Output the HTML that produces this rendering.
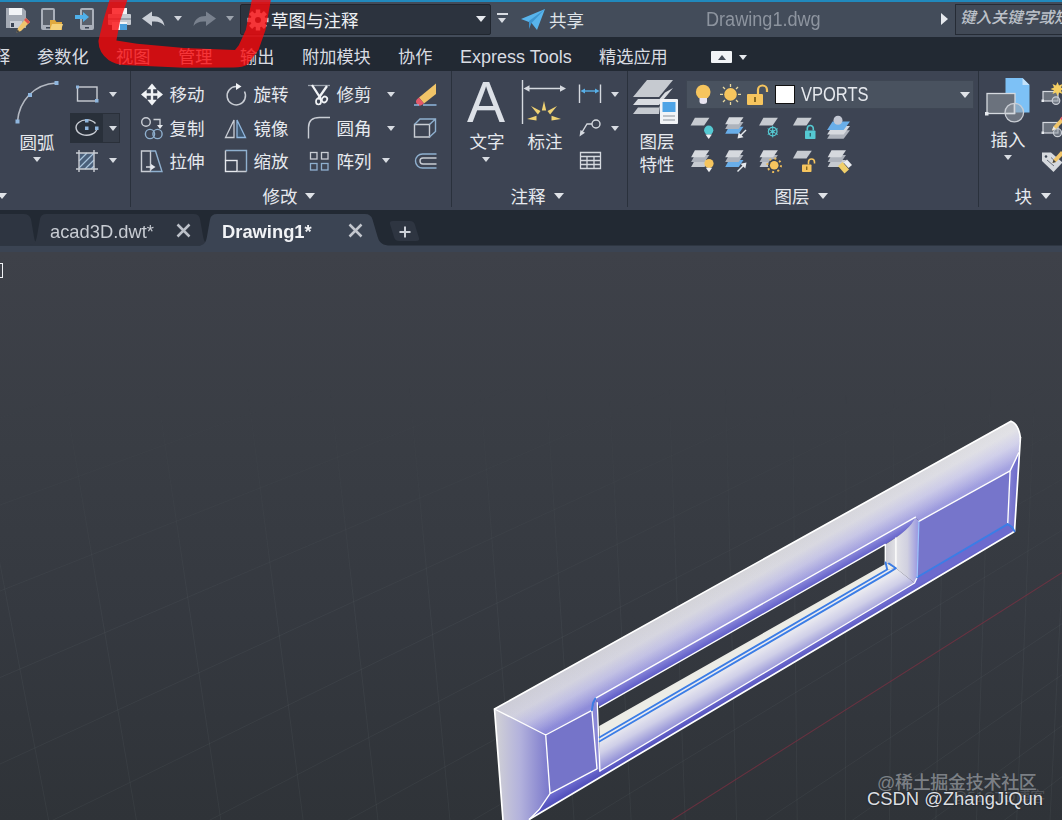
<!DOCTYPE html>
<html lang="zh-CN">
<head>
<meta charset="utf-8">
<title>Drawing1.dwg</title>
<style>
*{box-sizing:border-box;margin:0;padding:0}
html,body{width:1062px;height:820px;overflow:hidden;background:#2f343a}
body{position:relative;font-family:"Liberation Sans","Noto Sans CJK SC",sans-serif;color:#e4e7ec;font-size:17px;line-height:1}
.abs{position:absolute}
#titlebar{position:absolute;left:0;top:0;width:1062px;height:37px;background:#434c5a;border-top:2px solid #2189bd}
#menubar{position:absolute;left:0;top:37px;width:1062px;height:34px;background:#222933}
#ribbon{position:absolute;left:0;top:71px;width:1062px;height:139px;background:#3d4453}
#tabbar{position:absolute;left:0;top:210px;width:1062px;height:38px;background:#222933}
#tabline{position:absolute;left:0;top:247px;width:1062px;height:5px;background:#3b4453}
#canvas{position:absolute;left:0;top:252px;width:1062px;height:568px;background:linear-gradient(#3e4149,#393d44 35%,#353940 64%,#2f3338)}
.t{position:absolute;white-space:nowrap}
.m{position:absolute;top:49px;white-space:nowrap;font-size:17.200px;color:#d9dce2}
.sep{position:absolute;top:71px;width:1px;height:136px;background:#2a313c}
.lbl{position:absolute;white-space:nowrap;font-size:17.500px;color:#e6e9ee;margin-top:1.500px;margin-left:-0.500px}
.tri{position:absolute;width:0;height:0;border-left:5px solid transparent;border-right:5px solid transparent;border-top:6px solid #e0e3e8}
.tris{position:absolute;width:0;height:0;border-left:4px solid transparent;border-right:4px solid transparent;border-top:5px solid #d8dce2}
</style>
</head>
<body>
<div id="titlebar">
<!-- save as -->
<svg class="abs" style="left:4px;top:2.5px" width="28" height="28" viewBox="0 0 28 28">
<path d="M2 3h17l3 3v17H2z" fill="#a4aab4"/><rect x="5" y="3" width="13" height="7" fill="#f2f4f7"/><rect x="6" y="16" width="12" height="7" fill="#c9cdd4"/><rect x="7" y="18" width="3" height="4" fill="#3b4453"/>
<path d="M22 13l4 4-9 9-4.5 1.5L14 23z" fill="#f0c46c"/><path d="M22 13l4 4-2 2-4-4z" fill="#e0524f"/><path d="M12.500 27.5l1-3 2 2z" fill="#444"/>
</svg>
<!-- open from mobile -->
<svg class="abs" style="left:38px;top:2.5px" width="26" height="28" viewBox="0 0 26 28">
<rect x="3" y="3" width="14" height="22" rx="2" fill="#aab0ba"/><rect x="5" y="5" width="10" height="15" fill="#5a616c"/><rect x="8" y="22" width="4" height="1.500" fill="#3b4453"/>
<path d="M12 15h5l1.500 2H24v8H12z" fill="#e0a93f"/><path d="M14 19h11l-2 6H12z" fill="#f5d27c"/>
</svg>
<!-- save to mobile -->
<svg class="abs" style="left:73px;top:2.5px" width="26" height="28" viewBox="0 0 26 28">
<rect x="7" y="3" width="14" height="22" rx="2" fill="#aab0ba"/><rect x="9" y="5" width="10" height="15" fill="#5a616c"/><rect x="12" y="22" width="4" height="1.500" fill="#3b4453"/>
<path d="M2 10h8V7l6 5-6 5v-3H2z" fill="#4fb0ea"/>
</svg>
<!-- print -->
<svg class="abs" style="left:106px;top:4.5px" width="28" height="26" viewBox="0 0 28 26">
<rect x="6" y="1" width="15" height="7" fill="#f2f4f7"/><rect x="2" y="7" width="23" height="11" rx="1" fill="#c5cad1"/><rect x="2" y="11" width="23" height="2" fill="#9aa1ab"/><rect x="6" y="15" width="15" height="8" fill="#f2f4f7"/><rect x="14" y="17" width="7" height="6" fill="#4a9fdc"/>
</svg>
<!-- undo -->
<svg class="abs" style="left:140px;top:7.5px" width="28" height="20" viewBox="0 0 28 20">
<path d="M2 8.500L12 1.500v4.500c7 0 11.500 3 12.500 10-2.500-3.500-6-5-12.500-4.500V16z" fill="#c9ced6"/>
</svg>
<div class="tris" style="left:174px;top:13.5px;border-top-color:#cfd3da"></div>
<!-- redo -->
<svg class="abs" style="left:190px;top:7.5px" width="28" height="20" viewBox="0 0 28 20">
<path d="M26 8.500L16 1.500v4.500C9 6 4.500 9 3.500 16c2.500-3.500 6-5 12.500-4.500V16z" fill="#79818e"/>
</svg>
<div class="tris" style="left:226px;top:13.5px;border-top-color:#9ca3ad"></div>
<!-- workspace dropdown -->
<div class="abs" style="left:240px;top:2px;width:251px;height:31px;background:#2c333e;border:1px solid #20262f;border-radius:2px"></div>
<svg class="abs" style="left:246px;top:6px" width="24" height="24" viewBox="-12 -12 24 24">
<g fill="#d9dce1"><circle r="7.500"/>
<g id="gt"><rect x="-2.200" y="-10.500" width="4.400" height="21"/></g>
<use href="#gt" transform="rotate(45)"/><use href="#gt" transform="rotate(90)"/><use href="#gt" transform="rotate(135)"/></g>
<circle r="3" fill="#2c333e"/>
</svg>
<div class="t" style="left:271px;top:10.500px;font-size:17.500px;color:#eef0f3">草图与注释</div>
<div class="tri" style="left:476px;top:14px;border-top-color:#e6e9ee"></div>
<div class="abs" style="left:497px;top:11px;width:11px;height:2px;background:#d8dce2"></div>
<div class="tris" style="left:498px;top:16px;border-left-width:4.500px;border-right-width:4.500px"></div>
<!-- share -->
<svg class="abs" style="left:520px;top:6px" width="26" height="24" viewBox="0 0 26 24">
<path d="M1 11L25 1 17 22 11.500 15z" fill="#58b4ec"/><path d="M11.500 15L25 1 9 13v8z" fill="#3d95d0"/>
</svg>
<div class="t" style="left:549px;top:10.500px;font-size:17.500px;color:#dfe3e8">共享</div>
<div class="t" style="left:706px;top:7px;font-size:20px;color:#8d949f;transform-origin:0 50%;transform:scaleX(0.905)">Drawing1.dwg</div>
<div class="abs" style="left:941px;top:11px;width:0;height:0;border-top:6px solid transparent;border-bottom:6px solid transparent;border-left:7px solid #e6e9ee"></div>
<div class="abs" style="left:955px;top:2px;width:110px;height:31px;background:#414956;border:1px solid #252b35"></div>
<div class="t" style="left:960px;top:8px;font-size:15.700px;font-style:italic;font-weight:500;color:#bcc1c9">键入关键字或短语</div>
</div>
<div id="menubar"></div>
<div class="m" style="left:-7px">释</div>
<div class="m" style="left:37px">参数化</div>
<div class="m" style="left:116px">视图</div>
<div class="m" style="left:178px">管理</div>
<div class="m" style="left:240px">输出</div>
<div class="m" style="left:302px">附加模块</div>
<div class="m" style="left:398px">协作</div>
<div class="m" style="left:460px;font-size:18px;top:48px">Express Tools</div>
<div class="m" style="left:599px">精选应用</div>
<div class="abs" style="left:711px;top:51px;width:21px;height:12px;background:#f1f3f6;border-radius:1px"></div>
<div class="abs" style="left:717.500px;top:55px;width:0;height:0;border-left:4px solid transparent;border-right:4px solid transparent;border-bottom:5px solid #444b57"></div>
<div class="tris" style="left:739px;top:55px;border-top-color:#e6e9ee"></div>
<div id="ribbon"></div>
<div class="sep" style="left:130px"></div>
<div class="sep" style="left:451px"></div>
<div class="sep" style="left:627px"></div>
<div class="sep" style="left:978px"></div>
<!-- RIBBON-TEXT -->
<div class="lbl" style="left:20px;top:133px">圆弧</div>
<div class="tris" style="left:33px;top:157px"></div>
<div class="tris" style="left:109px;top:92px"></div>
<div class="abs" style="left:70px;top:113px;width:50px;height:30px;background:#363d49;border:1px solid #2a303a"></div>
<div class="abs" style="left:70px;top:113px;width:33px;height:30px;background:#29303a"></div>
<div class="tris" style="left:109px;top:126px"></div>
<div class="tris" style="left:109px;top:158px"></div>
<div class="tri" style="left:-3px;top:193px"></div>

<div class="lbl" style="left:170px;top:85px">移动</div>
<div class="lbl" style="left:170px;top:119px">复制</div>
<div class="lbl" style="left:170px;top:152px">拉伸</div>
<div class="lbl" style="left:254px;top:85px">旋转</div>
<div class="lbl" style="left:254px;top:119px">镜像</div>
<div class="lbl" style="left:254px;top:152px">缩放</div>
<div class="lbl" style="left:337px;top:85px">修剪</div>
<div class="lbl" style="left:337px;top:119px">圆角</div>
<div class="lbl" style="left:337px;top:152px">阵列</div>
<div class="tris" style="left:387px;top:92px"></div>
<div class="tris" style="left:387px;top:126px"></div>
<div class="tris" style="left:382px;top:158px"></div>
<div class="lbl" style="left:263px;top:187px">修改</div>
<div class="tri" style="left:305px;top:193px"></div>

<div class="t" style="left:467px;top:71px;font-size:57px;line-height:62px;color:#dde1e7">A</div>
<div class="lbl" style="left:470px;top:132.500px">文字</div>
<div class="tris" style="left:482px;top:157px"></div>
<div class="lbl" style="left:528px;top:132.500px">标注</div>
<div class="tris" style="left:611px;top:92px"></div>
<div class="tris" style="left:611px;top:126px"></div>
<div class="lbl" style="left:511px;top:187px">注释</div>
<div class="tri" style="left:554px;top:193px"></div>

<div class="lbl" style="left:640px;top:132px">图层</div>
<div class="lbl" style="left:640px;top:155px">特性</div>
<div class="abs" style="left:686px;top:80px;width:288px;height:29px;background:#49525f;border:1px solid #3e4653"></div>
<div class="abs" style="left:775px;top:85px;width:20px;height:19px;background:#fff;border:1px solid #111"></div>
<div class="t" style="left:801px;top:84px;font-size:20px;color:#e6e9ee;transform-origin:0 50%;transform:scaleX(0.825)">VPORTS</div>
<div class="tri" style="left:960px;top:92px"></div>
<div class="lbl" style="left:775px;top:187px">图层</div>
<div class="tri" style="left:818px;top:193px"></div>

<div class="lbl" style="left:991px;top:130.500px">插入</div>
<div class="tris" style="left:1004px;top:155px"></div>
<div class="lbl" style="left:1015px;top:187px">块</div>
<div class="tri" style="left:1041px;top:193px"></div>
<!-- RIBBON-ICONS -->
<svg class="abs" style="left:0;top:71px" width="1062" height="138" viewBox="0 71 1062 138" fill="none">
<!-- arc -->
<path d="M17.500 121.500C19 101 34 84 56.500 83" stroke="#b4b9c2" stroke-width="1.600"/>
<g fill="#8fb6de"><rect x="54.500" y="81" width="4" height="4"/><rect x="28" y="93" width="4" height="4"/><rect x="15.500" y="119.500" width="4" height="4"/></g>
<!-- rectangle -->
<rect x="77.500" y="87" width="19.500" height="14" stroke="#c9cdd4" stroke-width="1.400"/>
<g fill="#8fb6de"><rect x="76" y="85.500" width="3" height="3"/><rect x="95" y="99" width="3.500" height="3.500"/></g>
<!-- ellipse -->
<path d="M95.500 123.500A10.500 7.700 0 1 0 97 128.500" stroke="#c9cdd4" stroke-width="1.400"/>
<g fill="#8fb6de"><rect x="85" y="126.500" width="3.500" height="3.500"/><rect x="85" y="119" width="3.500" height="3.500"/><rect x="95" y="126.500" width="3.500" height="3.500"/></g>
<!-- hatch -->
<rect x="79" y="153" width="15" height="16" fill="#4a5f7a"/>
<path d="M79 161l8-8M79 168l15-15M85 169l9-9M91 169l3-3" stroke="#a9c4dd" stroke-width="1.200"/>
<path d="M76 153h22M76 169h22M79 150v22M94 150v22" stroke="#c9cdd4" stroke-width="1.400"/>
<!-- move -->
<path d="M152 86v17M143.500 94.500h17" stroke="#f1f3f6" stroke-width="2.400"/>
<g fill="#f1f3f6"><path d="M152 83.500l4.800 5.700h-9.600zM152 105.500l4.800-5.700h-9.600zM141 94.500l5.700-4.800v9.600zM163 94.500l-5.700-4.800v9.600z"/></g>
<!-- copy -->
<g stroke="#c9cdd4" stroke-width="1.400"><circle cx="146" cy="122" r="4.300"/><path d="M153.500 119.500h6.500v6"/></g>
<path d="M157 125h6l-3 4z" fill="#e6e9ee"/>
<g stroke="#8fb0cf" stroke-width="1.400"><circle cx="150" cy="134" r="4.600"/><circle cx="157.500" cy="134" r="4.600"/></g>
<!-- stretch -->
<path d="M141.500 151h9v20.500h-9z" stroke="#c9cdd4" stroke-width="1.400"/>
<path d="M150.500 151h5l6.500 20.500h-11.500" stroke="#8fb0cf" stroke-width="1.400"/>
<path d="M146 167h6" stroke="#e6e9ee" stroke-width="1.400"/><path d="M151 164l4.500 3-4.500 3z" fill="#e6e9ee"/>
<!-- rotate -->
<path d="M236 86.500A9.200 9.200 0 1 0 244.500 91.500" stroke="#c9cdd4" stroke-width="1.500"/>
<path d="M236 83l5.500 3.500-5.500 3.500z" fill="#f1f3f6"/>
<!-- mirror -->
<path d="M234 120v17.500h-8.500z" stroke="#c9cdd4" stroke-width="1.300"/>
<path d="M237 120v17.500h8.500z" stroke="#8fb6de" stroke-width="1.300" fill="#3d566f"/>
<!-- scale -->
<path d="M225.500 150.500h21v21" stroke="#8fb0cf" stroke-width="1.400"/><path d="M225.500 150.500v10M246.500 171.500h-9" stroke="#c9cdd4" stroke-width="1.400"/>
<rect x="225.500" y="160.500" width="11.500" height="11" stroke="#e6e9ee" stroke-width="1.400"/>
<!-- trim -->
<path d="M308 85.500h22" stroke="#9aa1ab" stroke-width="1.300"/>
<path d="M312 85l9 14M327 86l-9 13" stroke="#f1f3f6" stroke-width="2.300"/>
<g stroke="#f1f3f6" stroke-width="1.700"><ellipse cx="318.500" cy="101.500" rx="2.500" ry="3"/><ellipse cx="324.500" cy="99.500" rx="2.500" ry="3" transform="rotate(35 324.500 99.500)"/></g>
<!-- fillet -->
<path d="M308.500 138.500v-11q0-10 11-10h10.500" stroke="#c9cdd4" stroke-width="1.400"/>
<!-- array -->
<g stroke="#c9cdd4" stroke-width="1.300"><rect x="310.500" y="152.500" width="6.500" height="6.500"/><rect x="321.500" y="152.500" width="6.500" height="6.500"/></g>
<g stroke="#8fb0cf" stroke-width="1.300"><rect x="310.500" y="163.500" width="6.500" height="6.500"/><rect x="321.500" y="163.500" width="6.500" height="6.500"/></g>
<!-- erase -->
<path d="M436 83.500v10.500l-12 9.500-5-6z" fill="#f0c468"/><path d="M424 103.500l-5-6-1.500 1.300a3.800 3.800 0 0 0 5 5.800z" fill="#e4596a"/>
<path d="M414 105h5M423 105h13.500" stroke="#8fb6de" stroke-width="1.300"/>
<!-- box -->
<path d="M414.500 124.500h15v12.500h-15z" stroke="#c9cdd4" stroke-width="1.400"/>
<path d="M414.500 124.500l5.500-5.500h15.500v12.500l-6 5.500M429.500 124.500l6-5.500" stroke="#8fb0cf" stroke-width="1.400"/>
<!-- offset -->
<path d="M436.500 154H422.500a7 7 0 0 0 0 14H436.500" stroke="#8fb0cf" stroke-width="1.400"/>
<path d="M436.500 158H423a3 3 0 0 0 0 6H436.500" stroke="#c9cdd4" stroke-width="1.400"/>
</svg>
<!-- ANNOT -->
<svg class="abs" style="left:0;top:71px" width="1062" height="138" viewBox="0 71 1062 138" fill="none">
<!-- dimension big -->
<path d="M522.500 80v44" stroke="#d5d9df" stroke-width="1.400"/>
<path d="M527 88.500h35" stroke="#d5d9df" stroke-width="1.400"/>
<path d="M523.500 88.500l6-3.300v6.600zM566 88.500l-6-3.300v6.600z" fill="#d5d9df"/>
<g fill="#f0d272"><path d="M544 101l2.200 9.500h-4.400z"/><path d="M531 106l9.500 5-2.600 3.600z"/><path d="M557 106l-9.500 5 2.600 3.600z"/><path d="M527 119l9.500-3.200v4.600z"/><path d="M561 119l-9.500-3.200v4.600z"/></g>
<!-- linear dim small -->
<path d="M579.500 84.500v18.500M600.500 84.500v18.500" stroke="#d5d9df" stroke-width="1.400"/>
<path d="M583 91h14" stroke="#58b0e8" stroke-width="1.400"/><path d="M580.500 91l4.500-2.600v5.200zM599.500 91l-4.500-2.600v5.200z" fill="#58b0e8"/>
<!-- leader -->
<circle cx="596" cy="124" r="4" stroke="#d5d9df" stroke-width="1.400"/>
<path d="M592 124h-5l-5.500 9" stroke="#d5d9df" stroke-width="1.400"/><path d="M579.500 136.500l1-6.500 4.500 2.800z" fill="#d5d9df"/>
<!-- table -->
<path d="M580.500 152.500h20v16h-20zM580.500 156.500h20M580.500 160.500h20M580.500 164.500h20M587 156.500v12M594 156.500v12" stroke="#d5d9df" stroke-width="1.300"/>
<!-- layer properties big -->
<g fill="#c6cad0"><path d="M647 80h26l-14 17h-26z"/><path d="M665 92.500l8-4.500-14 17h-26l5-6h21.500z" fill="#d9dce1"/><path d="M660 105.500l-1 8.500h-26l5-6.500h21z" fill="#c6cad0"/></g>
<rect x="660" y="99" width="18" height="25" rx="1" fill="#f2f4f7"/><rect x="662.500" y="102" width="13" height="10" fill="#4ea4e6"/>
<path d="M663 116h12M663 120h12" stroke="#8a919b" stroke-width="1.200"/>
<!-- dropdown icons -->
<circle cx="703.200" cy="92" r="7.300" fill="#f6c55e"/><path d="M699.500 98h7.500v3.500q0 2.500-3.750 2.500t-3.750-2.500z" fill="#e8e4f0"/>
<circle cx="730.500" cy="94.400" r="6.300" fill="#f6c55e"/>
<path d="M730.500 84v3M730.500 102v3M720 94.400h3M738 94.400h3M723 87l2 2M736 100l2 2M738 87l-2 2M725 100l-2 2" stroke="#e8d9a0" stroke-width="1.300"/>
<rect x="747" y="94" width="16" height="11" rx="1" fill="#f6c55e"/><path d="M758 94v-4a4.500 4.500 0 0 1 9 0v2" stroke="#f6c55e" stroke-width="2.200"/><rect x="754" y="97" width="2" height="5" fill="#8a6a20"/>
</svg>
<svg class="abs" style="left:0;top:71px" width="1062" height="138" viewBox="0 71 1062 138" fill="none">
<path d="M694.9 117.7h14.5l-5.3 7.8h-13.5z" fill="#c6cad0"/>
<circle cx="708.700" cy="130.200" r="4.600" fill="#55c9d2"/><path d="M705.500 134.500h6.400l-3.200 4.500z" fill="#eef0f3"/>
<path d="M729.0 126.8h14.5l-4.8 7.0h-13.5z" fill="#69aee9"/><path d="M729.0 122.0h14.5l-4.8 7.0h-13.5z" fill="#aeb3bc"/><path d="M729.0 117.2h14.5l-4.8 7.0h-13.5z" fill="#d6d9de"/>
<path d="M746 130l-6 6" stroke="#e6e9ee" stroke-width="1.500"/><path d="M737.500 138.500l1.200-6 4.800 4.800z" fill="#e6e9ee"/>
<path d="M763.4 117.7h14.5l-5.3 7.8h-13.5z" fill="#c6cad0"/>
<circle cx="772.700" cy="131.600" r="4.300" stroke="#55c9d2" stroke-width="1.300"/><circle cx="772.700" cy="131.600" r="1.600" fill="#55c9d2"/><path d="M772.700 125.800v11.600M767.700 128.700l10 5.800M767.700 134.500l10-5.800" stroke="#55c9d2" stroke-width="1"/>
<path d="M797.3 117.7h14.5l-5.3 7.8h-13.5z" fill="#c6cad0"/>
<rect x="805" y="130.500" width="10.500" height="8.500" rx="0.800" fill="#55c9d2"/><path d="M807.300 130.500v-2a3 3 0 0 1 6 0v2" stroke="#55c9d2" stroke-width="1.600"/><rect x="809.600" y="133" width="1.400" height="3.500" fill="#2c6a70"/>
<path d="M832.5 130.3h17.5l-6.4 8.5h-16.5z" fill="#aeb3bc"/><path d="M832.5 126.0h17.5l-6.4 8.5h-16.5z" fill="#d6d9de"/><path d="M832.5 121.5h17.5l-6.4 8.5h-16.5z" fill="#69aee9"/>
<circle cx="838" cy="120.300" r="4.500" fill="#c3c7d3"/>
<path d="M694.9 159.9h14.5l-4.8 7.0h-13.5z" fill="#c6cad0"/><path d="M694.9 155.1h14.5l-4.8 7.0h-13.5z" fill="#aeb3bc"/><path d="M694.9 150.3h14.5l-4.8 7.0h-13.5z" fill="#d6d9de"/>
<circle cx="709" cy="163.500" r="4.600" fill="#f6c55e"/><path d="M705.800 167.800h6.400l-3.200 4.500z" fill="#eef0f3"/>
<path d="M729.0 159.9h14.5l-4.8 7.0h-13.5z" fill="#69aee9"/><path d="M729.0 155.1h14.5l-4.8 7.0h-13.5z" fill="#aeb3bc"/><path d="M729.0 150.3h14.5l-4.8 7.0h-13.5z" fill="#d6d9de"/>
<path d="M737.500 171.500l6-6" stroke="#e6e9ee" stroke-width="1.500"/><path d="M746.500 162.500l-1.200 6-4.800-4.800z" fill="#e6e9ee"/>
<path d="M763.4 159.9h14.5l-4.8 7.0h-13.5z" fill="#c6cad0"/><path d="M763.4 155.1h14.5l-4.8 7.0h-13.5z" fill="#aeb3bc"/><path d="M763.4 150.3h14.5l-4.8 7.0h-13.5z" fill="#d6d9de"/>
<circle cx="774.200" cy="165.200" r="6.200" fill="#3b4453"/><circle cx="774.200" cy="165.200" r="4.300" fill="#f6c55e"/><circle cx="774.200" cy="165.200" r="6.800" stroke="#e9b95a" stroke-width="2" stroke-dasharray="2 3.340"/>
<path d="M797.3 150.8h14.5l-5.3 7.8h-13.5z" fill="#c6cad0"/>
<rect x="802" y="164.500" width="9.500" height="7.500" rx="0.800" fill="#f6c55e"/><path d="M808.500 164.500v-2.500a3 3 0 0 1 6 0v1.500" stroke="#f6c55e" stroke-width="1.600"/><rect x="806" y="166.500" width="1.400" height="3.500" fill="#8a6a20"/>
<path d="M831.5 159.9h14.5l-4.8 7.0h-13.5z" fill="#c6cad0"/><path d="M831.5 155.1h14.5l-4.8 7.0h-13.5z" fill="#aeb3bc"/><path d="M831.5 150.3h14.5l-4.8 7.0h-13.5z" fill="#d6d9de"/>
<path d="M838 166l4.500-4 6.500 7.500-4.500 4z" fill="#f0cf6a"/><path d="M843.500 162.500l3.500-3 5 5.500-3.500 3z" fill="#e9ecf0"/>
</svg>
<svg class="abs" style="left:0;top:71px" width="1062" height="138" viewBox="0 71 1062 138" fill="none">
<path d="M1005.500 78h17l7 7v27.500h-24z" fill="#7dc1f6"/><path d="M1022.500 78l7 7h-7z" fill="#c4e2fa"/>
<rect x="987" y="93.500" width="28" height="20" fill="#6b727d" stroke="#d5d9df" stroke-width="1.300"/>
<rect x="985" y="112" width="3.500" height="3.500" fill="#e6e9ee"/>
<circle cx="1014.300" cy="112.600" r="9.300" fill="rgba(150,156,166,0.55)" stroke="#c9cdd4" stroke-width="1.300"/>
<path d="M1014.300 103.500v10h-9" stroke="#d5d9df" stroke-width="1.300"/>
<rect x="1043" y="91.500" width="15" height="9.500" fill="#6b727d" stroke="#d5d9df" stroke-width="1.200"/><rect x="1041.500" y="99.500" width="2.500" height="2.500" fill="#e6e9ee"/>
<circle cx="1056" cy="100.600" r="3.800" fill="rgba(150,156,166,0.55)" stroke="#c9cdd4" stroke-width="1.200"/>
<path d="M1057.500 82l1.500 3.500 3.500-1.500-1.500 3.500 3.500 1.500-3.500 1.500 1.500 3.500-3.500-1.500-1.500 3.500-1.500-3.500-3.500 1.500 1.500-3.500-3.500-1.500 3.500-1.500-1.500-3.500 3.500 1.500z" fill="#f5cf63"/>
<rect x="1043" y="122.500" width="15" height="10.500" fill="#6b727d" stroke="#d5d9df" stroke-width="1.200"/><rect x="1041.500" y="131.500" width="2.500" height="2.500" fill="#e6e9ee"/>
<circle cx="1057.500" cy="132.700" r="4" fill="rgba(150,156,166,0.55)" stroke="#c9cdd4" stroke-width="1.200"/>
<path d="M1062 117l3 3-9 9-4 1.500 1.500-4z" fill="#f0c468"/><path d="M1052 130.500l1.500-4 2.500 2.500z" fill="#e6e9ee"/><path d="M1060 118.500l2-2 3 3-2 2z" fill="#e4596a"/>
<path d="M1042 152.500h9l11.500 10-9 9.500-11.500-11z" fill="#d5d8dd"/><circle cx="1046" cy="156.500" r="1.300" fill="#3b4453"/><path d="M1047 160l7 6M1051 157.500l5 4.500" stroke="#6b727d" stroke-width="1"/>
<path d="M1061 151l3 3-8 8-3.500 1 1-3.500z" fill="#f0c468"/><path d="M1052.500 163l1-3.500 2.500 2.500z" fill="#444"/>
</svg>
<div id="tabbar"></div>
<svg class="abs" style="left:0;top:209px" width="1062" height="43" viewBox="0 0 1062 43">
<path d="M-10 36V11q0-6 6-6H24q5 0 7 5l3 18q1 7 5 8z" fill="#2e3541"/>
<path d="M30 36c5-1 6-4 7-9l3-17q1-5 6-5H194q5 0 6 5l3 17c1 5 2 8 7 9z" fill="#2e3541"/>
<path d="M0 36.500H200c5-1 6-4 7-9l3-17q1-5.500 7-5.500H365q6 0 7.500 5.500l5 17c1.500 5 3.500 8 10.500 9H1062V43H0z" fill="#3b4453"/>
<path d="M393 12h17q4 0 5 4l4 13q1 3-3 3h-17q-4 0-5-4l-4-13q-1-3 3-3z" fill="#2e3541"/>
<path d="M399.500 23h11M405 17.500v11" stroke="#ccd0d7" stroke-width="2" fill="none"/>
<path d="M177.500 15.500l12 12M189.500 15.500l-12 12" stroke="#bcc1c9" stroke-width="2.500" fill="none"/>
<path d="M349.500 15.500l12 12M361.500 15.500l-12 12" stroke="#c3c7ce" stroke-width="2.500" fill="none"/>
</svg>
<div class="t" style="left:50px;top:221.500px;font-size:19px;color:#c8ccd3;transform-origin:0 50%;transform:scaleX(0.965)">acad3D.dwt*</div>
<div class="t" style="left:222px;top:221.500px;font-size:19px;font-weight:bold;color:#f1f3f6;transform-origin:0 50%;transform:scaleX(0.965)">Drawing1*</div>
<div id="canvas"></div>
<!-- OBJ-START -->
<svg class="abs" style="left:0;top:252px" width="1062" height="568" viewBox="0 252 1062 568" fill="none">
<defs>
<linearGradient id="gTop" gradientUnits="userSpaceOnUse" x1="750.0" y1="566.4" x2="770.8" y2="602.9"><stop offset="0" stop-color="#d6d6d8"/><stop offset="0.3" stop-color="#dadae0"/><stop offset="0.6" stop-color="#c6c5e5"/><stop offset="0.85" stop-color="#a5a3df"/><stop offset="1" stop-color="#8e8cd9"/></linearGradient>
<linearGradient id="gCh" gradientUnits="userSpaceOnUse" x1="750.0" y1="610.7" x2="755.4" y2="620.3"><stop offset="0" stop-color="#8b89da"/><stop offset="1" stop-color="#5755c4"/></linearGradient>
<linearGradient id="gLow" gradientUnits="userSpaceOnUse" x1="750.0" y1="653.9" x2="764.9" y2="680.0"><stop offset="0" stop-color="#ebebf0"/><stop offset="0.4" stop-color="#cfcfe8"/><stop offset="1" stop-color="#7f7dd2"/></linearGradient>
<linearGradient id="gBot" gradientUnits="userSpaceOnUse" x1="750.0" y1="680.9" x2="753.5" y2="687.0"><stop offset="0" stop-color="#6c6ace"/><stop offset="1" stop-color="#5553bd"/></linearGradient>
<linearGradient id="gEnd" gradientUnits="userSpaceOnUse" x1="497" y1="760" x2="549" y2="760"><stop offset="0" stop-color="#cfcfd6"/><stop offset="0.45" stop-color="#b2b1dc"/><stop offset="1" stop-color="#7b79cc"/></linearGradient>
<linearGradient id="gWall" gradientUnits="userSpaceOnUse" x1="885" y1="550" x2="917" y2="550"><stop offset="0" stop-color="#c9c9d2"/><stop offset="0.35" stop-color="#e2e2e6"/><stop offset="0.7" stop-color="#d0d0e0"/><stop offset="1" stop-color="#a09ee0"/></linearGradient>
<linearGradient id="gSide" gradientUnits="userSpaceOnUse" x1="1007" y1="500" x2="1019" y2="500"><stop offset="0" stop-color="#8684d6"/><stop offset="1" stop-color="#6a68c8"/></linearGradient>
<linearGradient id="gAlong" gradientUnits="userSpaceOnUse" x1="500" y1="700" x2="1010" y2="420"><stop offset="0" stop-color="#7a78d0" stop-opacity="0.10"/><stop offset="0.5" stop-color="#bcbbe6" stop-opacity="0.05"/><stop offset="1" stop-color="#ffffff" stop-opacity="0.22"/></linearGradient>
</defs>
<defs><linearGradient id="gFade" gradientUnits="userSpaceOnUse" x1="0" y1="380" x2="0" y2="620"><stop offset="0" stop-color="#fff" stop-opacity="0"/><stop offset="1" stop-color="#fff" stop-opacity="1"/></linearGradient><mask id="mFade"><rect x="0" y="252" width="1062" height="568" fill="url(#gFade)"/></mask></defs>
<g mask="url(#mFade)" stroke="#aeb8c2" stroke-opacity="0.062" stroke-width="1">
<path d="M-160.4 252L-40.4 820M-59.2 252L48.6 820M40.6 252L136.4 820M136.4 252L220.8 820M229.8 252L303.1 820M314.9 252L377.9 820M396.7 252L449.9 820M469.4 252L514.0 820M537.6 252L574.0 820M602.4 252L631.1 820M664.0 252L685.2 820M722.2 252L736.5 820M791.1 252L797.2 820M846.1 252L845.6 820M895.9 252L889.4 820M948.6 252L935.9 820M994.8 252L976.5 820M1040.5 252L1016.7 820M1078.3 252L1050.0 820M0 418.0L1062 64.0M0 505.0L1062 117.5M0 591.0L1062 170.3M0 677.5L1062 223.4M0 764.0L1062 276.6M0 846.0L1062 327.0M0 929.0L1062 377.9M0 1011.0L1062 428.3M0 1094.0L1062 479.3M0 1177.0L1062 530.3M0 1329.0L1062 623.7M0 1412.0L1062 674.7M0 1495.0L1062 725.7M0 1578.0L1062 776.7"/>
</g>
<path d="M0 1246L1062 572.7" stroke="#8c2f42" stroke-opacity="0.6" stroke-width="1.1"/>
<path d="M494.5 709.0 L545.7 735.0 L550.0 793.6 L539.0 809.8 L529.5 819.2 L528.5 820.0 L503.0 820.0z" fill="url(#gEnd)"/>
<path d="M494.5 709.0 L545.7 735.0 L591.9 710.4 L595.3 698.4 L915.5 517.1 L918.9 521.3 L1010.1 470.9 L1018.7 452.9 L1020.4 437.6 L1019.0 430.0 L1016.0 424.5 L1011.0 421.3z" fill="url(#gTop)"/>
<path d="M494.5 709.0 L545.7 735.0 L591.9 710.4 L595.3 698.4 L915.5 517.1 L918.9 521.3 L1010.1 470.9 L1018.7 452.9 L1020.4 437.6 L1019.0 430.0 L1016.0 424.5 L1011.0 421.3z" fill="url(#gAlong)"/>
<path d="M545.7 735.0 L591.9 710.4 L597.0 768.8 L550.0 793.6z" fill="#7574c9"/>
<path d="M918.9 521.3 L1010.1 470.9 L1007.7 524.1 L917.2 577.3z" fill="#7675cb"/>
<path d="M1010.1 470.9 L1018.7 452.9 L1020.4 437.6 L1014.5 531.2 L1007.7 524.1z" fill="url(#gSide)"/>
<path d="M595.3 698.4 L597.3 702.7 L599.9 771.0 L597.0 768.8 L591.9 710.4z" fill="#8a88d6"/>
<path d="M595.3 698.4 L915.5 517.1 L915.5 525.1 L885.3 544.4 L599.6 707.2 L597.3 702.7z" fill="url(#gCh)"/>
<path d="M599.2 726.0 L885.3 564.1 L885.6 562.5 L895.9 568.3 L887.2 569.5 L599.7 737.2z" fill="#ecece6"/>
<path d="M599.4 737.3 L887.2 569.5 L895.9 568.3 L914.6 583.0 L599.9 771.0z" fill="url(#gLow)"/>
<path d="M885.3 544.4 Q910.5 530.0 915.5 517.1 L918.9 521.3 L917.2 577.3 L914.6 583.0 L895.9 568.3 L885.6 562.5z" fill="url(#gWall)"/>
<path d="M550.0 793.6 L597.0 768.8 L599.9 771.0 L914.6 583.0 L917.2 577.3 L1007.7 524.1 L1014.5 531.2 L1012.0 533.0 L529.5 819.2 L539.0 809.8z" fill="url(#gBot)"/>
<path d="M503.0 820.0 L494.5 709.0 L1011.0 421.3 Q1018.5 424 1020.4 437.6 " stroke="#ffffff" stroke-width="1.7" stroke-linejoin="round" stroke-linecap="round"/>
<path d="M1020.4 437.6 L1014.5 531.2 L1012.0 533.0 L529.5 819.2" stroke="#ffffff" stroke-width="1.7" stroke-linejoin="round" stroke-linecap="round" stroke-width="1.6"/>
<path d="M494.5 709.0 L545.7 735.0 L591.9 710.4 M545.7 735.0 L550.0 793.6 L597.0 768.8 M550.0 793.6 L539.0 809.8 L529.5 819.2 M591.9 710.4 L597.0 768.8 M597.3 702.7 L599.9 771.0" stroke="#ffffff" stroke-width="1.35" stroke-linejoin="round" stroke-linecap="round"/>
<path d="M595.3 698.4 L915.5 517.1 M599.6 707.2 L885.3 544.4 M599.9 771.0 L914.6 583.0 M918.9 521.3 L1010.1 470.9 L1018.7 452.9 M1010.1 470.9 L1007.7 524.1 M885.3 544.4 L885.3 564.1 L885.6 562.5 M895.9 538.0 L895.9 568.3 M914.6 583.0 L917.2 577.3" stroke="#ffffff" stroke-width="1.35" stroke-linejoin="round" stroke-linecap="round"/>
<path d="M599.7 737.2 L887.2 569.5 L885.6 562.5 M599.7 741.2 L890.0 571.9 L895.9 568.3 L889.0 563.5" stroke="#3b7de6" stroke-width="1.9" stroke-linejoin="round" stroke-linecap="round"/>
<path d="M595.3 698.4 L593.0 703.0 L591.9 710.4" stroke="#3b7de6" stroke-width="1.9" stroke-linejoin="round" stroke-linecap="round" stroke-width="1.8"/>
<path d="M917.2 577.3 L1007.7 524.1 M1007.7 524.1 L1012.0 527.0 L1014.5 531.2" stroke="#3b7de6" stroke-width="1.9" stroke-linejoin="round" stroke-linecap="round" stroke-width="1.8"/>
<path d="M918.9 521.3 L917.2 577.3" stroke="#9cc4ff" stroke-width="1.2"/>
</svg>
<!-- OBJ-END -->
<!-- EXTRA -->
<div class="abs" style="left:-3px;top:263px;width:6px;height:15px;border:1.500px solid #f1f3f6"></div>
<div class="t" style="left:877px;top:774px;font-size:18px;font-weight:500;color:rgba(190,194,200,0.55);letter-spacing:-0.300px">@稀土掘金技术社区</div>
<div class="t" style="left:952px;top:789px;font-size:15px;color:rgba(160,165,172,0.28)">@51CTO博客</div>
<div class="t" style="left:867px;top:789.500px;font-size:18.400px;color:#dcdee2;text-shadow:0 0 2px rgba(0,0,0,0.6)">CSDN @ZhangJiQun</div>
<svg class="abs" style="left:0;top:0" width="300" height="80" viewBox="0 0 300 80">
<path d="M109.800 -1L103.200 20.700L98.500 40.500Q98 52 108.800 60.300Q115 64.500 123.900 65L184.200 67.800L233.100 67.400Q243 67.500 247.500 64.500L252 58.400L258.500 49.900L265.500 30.100L271 -1L252 -1L245.800 30.100L238.800 45.200L235 49.900L184.200 48L137.100 43.700L116.400 40.500L120.100 20.700L127.700 -1z" fill="#fd080a" fill-opacity="0.790"/>
</svg>
</body>
</html>
